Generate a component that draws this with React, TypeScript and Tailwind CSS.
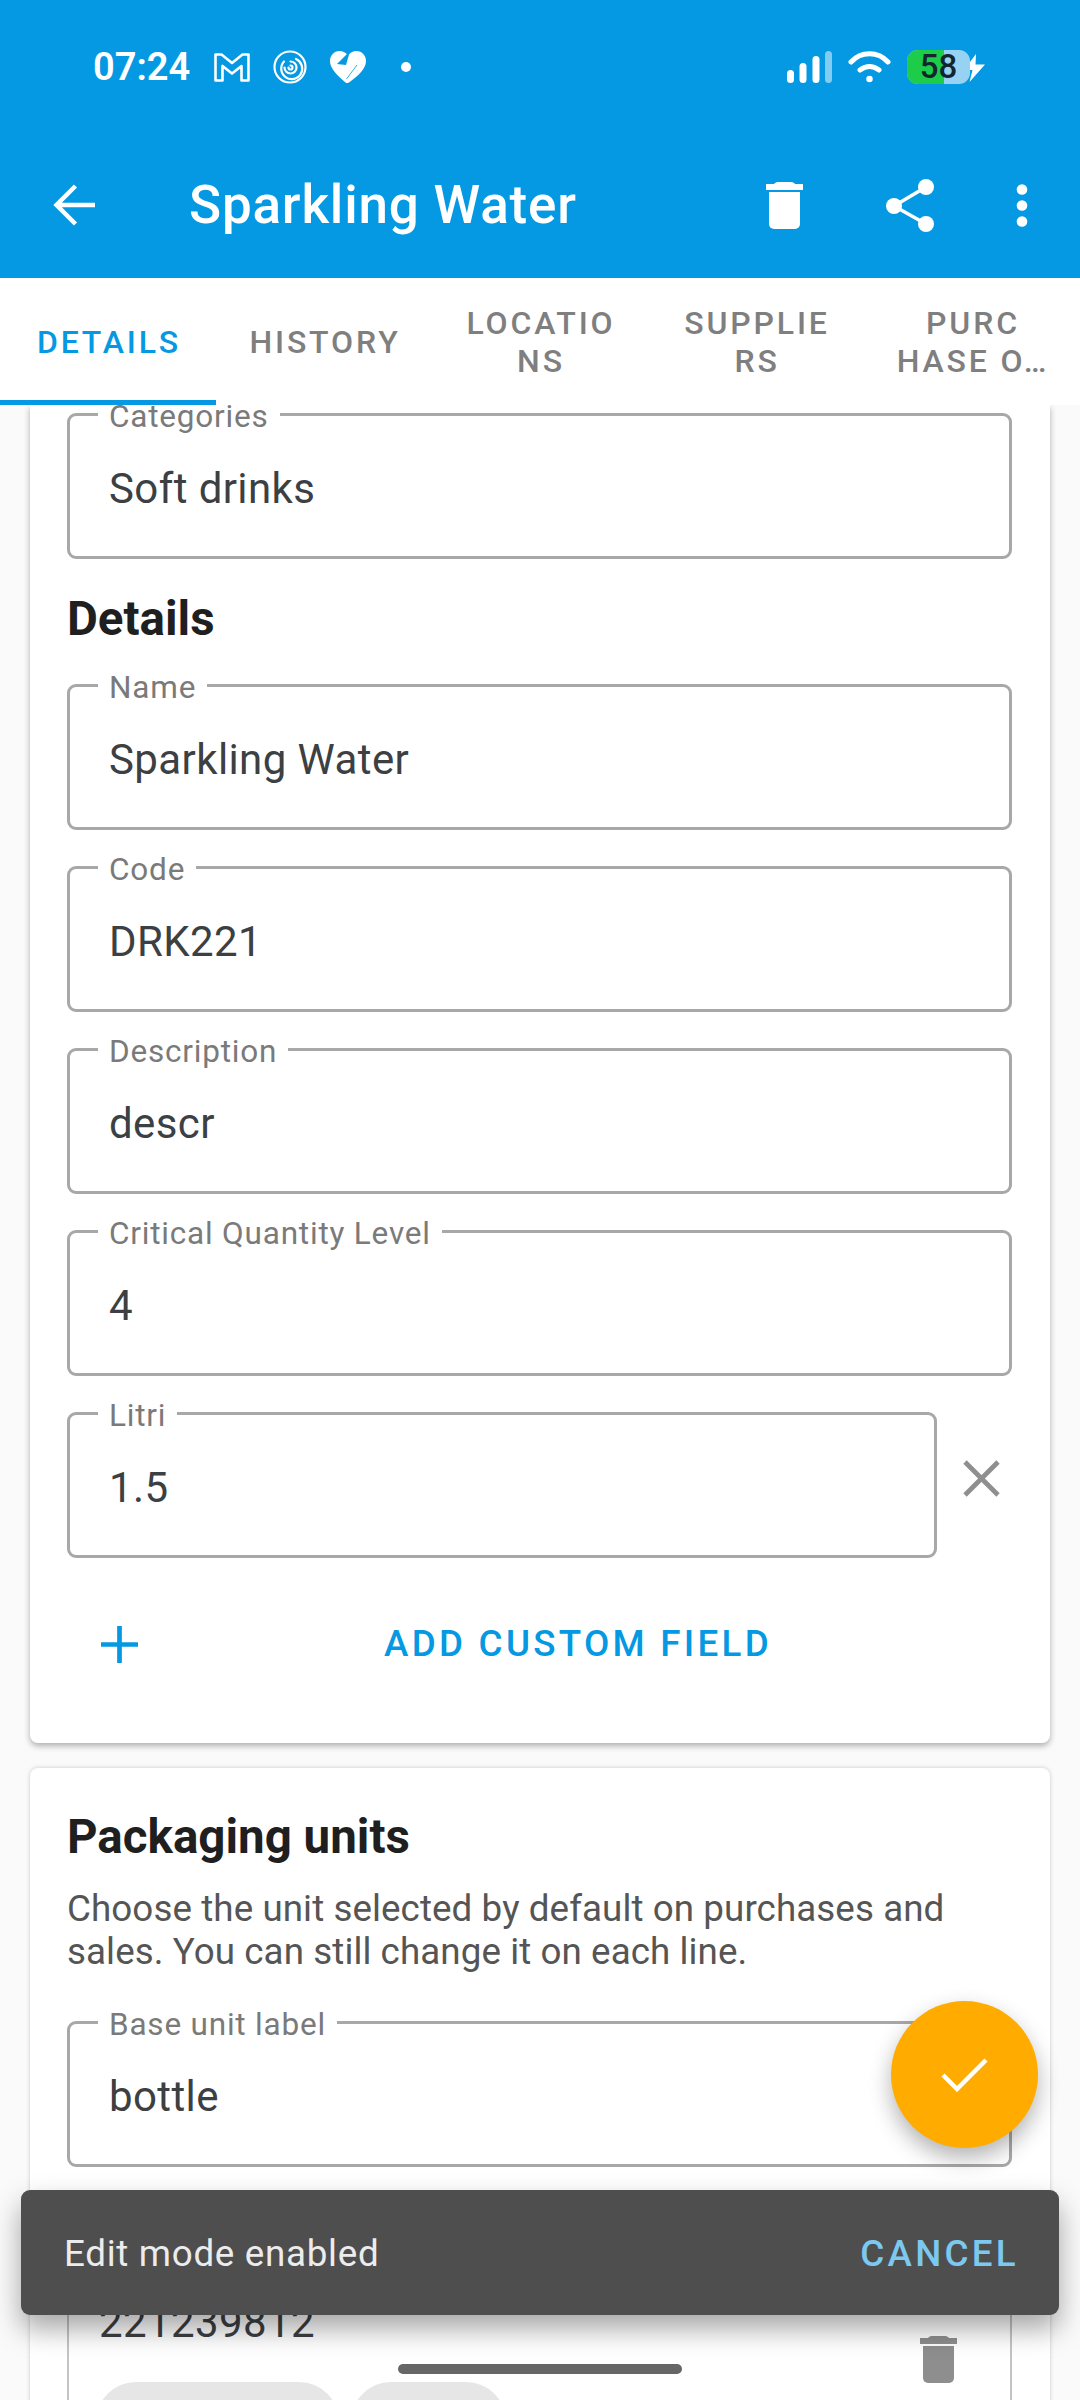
const tabs = [
  { lines: ["DETAILS"], active: true },
  { lines: ["HISTORY"] },
  { lines: ["LOCATIO", "NS"] },
  { lines: ["SUPPLIE", "RS"] },
  { lines: ["PURC", "HASE O…"] },
];

// Material "delete" bin, with a little gap between lid and body
function TrashIcon({ className }: { className?: string }) {
  return (
    <svg viewBox="0 0 37 47" className={className} fill="currentColor">
      <path d="M8 2c1-1.500 3-2 4-2h13c1 0 3 .5 4 2h8v6H0V2z" />
      <path d="M3 10h31v32a5 5 0 0 1-5 5H8a5 5 0 0 1-5-5z" />
    </svg>
  );
}

function StatusBar() {
  return (
    <div className="flex h-[132px] items-start justify-between pl-[93px] pr-[92px] pt-[46px]">
      <div className="flex h-[42px] items-center">
        <span className="w-[97px] text-[38px] leading-[42px] font-semibold whitespace-nowrap text-white">07:24</span>
        <svg viewBox="0 0 36 29" className="ml-[24px] h-[29px] w-[36px]" fill="none" stroke="#fff" strokeWidth="2.6" strokeLinejoin="round">
          <path d="M1.500 1.500h6l10.500 8.500 10.500-8.500h6v26h-7V13l-9.500 7.500L8.500 13v14.500h-7z" />
        </svg>
        <svg viewBox="0 0 34 34" className="ml-[23px] h-[34px] w-[34px]" fill="none" stroke="#fff" strokeWidth="2.2" strokeLinecap="round">
          <circle cx="17" cy="17" r="15.500" />
          <path d="M23 9a10.500 10.500 0 1 1-12 2.500M17.500 11.500a6 6 0 1 1-6 6M17.500 15.500a2 2 0 1 1-2 2" />
        </svg>
        <svg viewBox="0 0 36 32" className="ml-[23px] h-[32px] w-[36px]">
          <path d="M9.500 0C13 0 16 1.500 18 4.500 20 1.500 23 0 26.500 0 32 0 36 4.500 36 10c0 8-8 15-17 21.500-1 .8-2.500.8-3.500 0C8 25 0 18 0 10 0 4.500 4 0 9.500 0z" fill="#fff" />
          <path d="M20 0 7 13l9 1z" fill="#0499e2" />
          <path d="M27 14 16.500 28" stroke="#0499e2" strokeWidth="0.8" fill="none" />
        </svg>
        <span className="ml-[35px] h-[10px] w-[10px] rounded-full bg-white" />
      </div>
      <div className="flex h-[42px] items-center">
        <svg viewBox="0 0 45 32" className="h-[32px] w-[45px]">
          <rect x="0" y="19" width="7" height="13" rx="3.500" fill="#fff" />
          <rect x="12.500" y="12" width="7" height="20" rx="3.500" fill="#fff" />
          <rect x="25.500" y="5" width="7" height="27" rx="3.500" fill="#fff" />
          <rect x="38" y="0" width="7" height="32" rx="3.500" fill="#fff" fillOpacity="0.5" />
        </svg>
        <svg viewBox="0 0 43 32" className="ml-[16px] h-[32px] w-[43px]" fill="none" stroke="#fff" strokeWidth="5" strokeLinecap="round">
          <path d="M3 11C13 0 30 0 40 11" />
          <path d="M12 19c6-4.500 13-4.500 19 0" />
          <circle cx="21.500" cy="28" r="1.500" fill="#fff" strokeWidth="3.500" />
        </svg>
        <div className="relative ml-[16px] flex h-[34px] w-[63px] items-center justify-center rounded-[11px] bg-[#97d2f3]">
          <div className="absolute inset-y-0 left-0 w-[37px] rounded-l-[11px] bg-[#1dcd4a]" />
          <span className="relative text-[33px] leading-[34px] font-medium text-[#13262f]">58</span>
        </div>
        <svg viewBox="0 0 27 31" className="-ml-[9px] h-[31px] w-[27px]">
          <path d="M15 2 3 18h8.500L8.500 30 24 12.500h-9.500z" fill="#fff" stroke="#0499e2" strokeWidth="3" paintOrder="stroke" strokeLinejoin="round" />
        </svg>
      </div>
    </div>
  );
}

function AppBar() {
  return (
    <div className="flex h-[146px] items-center">
      <svg viewBox="0 0 42 42" className="ml-[53px] h-[42px] w-[42px]" fill="none" stroke="#fff" strokeWidth="4.500">
        <path d="M42 21H4M22.500 2 3.500 21l19 19" />
      </svg>
      <h1 className="ml-[94px] flex-1 text-[53px] leading-none font-medium tracking-[0.8px] text-white">Sparkling Water</h1>
      <TrashIcon className="h-[47px] w-[37px] text-white" />
      <svg viewBox="0 0 48 53" className="ml-[83px] h-[53px] w-[48px]" fill="#fff" stroke="#fff">
        <path d="M40 8 8 27l32 18" fill="none" strokeWidth="3.500" />
        <circle cx="40" cy="8" r="8" strokeWidth="0" />
        <circle cx="8" cy="27" r="8" strokeWidth="0" />
        <circle cx="40" cy="45" r="8" strokeWidth="0" />
      </svg>
      <svg viewBox="0 0 12 43" className="ml-[82px] mr-[52px] h-[43px] w-[12px]" fill="#fff">
        <circle cx="6" cy="5.500" r="5.300" />
        <circle cx="6" cy="21.500" r="5.300" />
        <circle cx="6" cy="37.500" r="5.300" />
      </svg>
    </div>
  );
}

function TabBar() {
  return (
    <div className="relative z-10 grid h-[127px] grid-cols-5 bg-white">
      {tabs.map((tab) => (
        <div
          key={tab.lines[0]}
          className={`flex flex-col items-center justify-center pl-[2px] text-[32px] leading-[38px] font-medium tracking-[2.85px] ${
            tab.active ? "border-b-[5px] border-[#0499e2] pt-[5px] text-[#0499e2]" : "text-[#7f7f7f]"
          }`}
        >
          {tab.lines.map((line) => (
            <span key={line} className="whitespace-nowrap">
              {line}
            </span>
          ))}
        </div>
      ))}
    </div>
  );
}

function Field({ label, value, className = "" }: { label: string; value: string; className?: string }) {
  return (
    <div className={`relative flex h-[146px] items-center rounded-[9px] border-[3px] border-[#a8a8a8] px-[39px] pt-[5px] ${className}`}>
      <span className="absolute -top-[16px] left-[28px] bg-white px-[11px] text-[31.5px] leading-[34px] tracking-[0.8px] text-[#7a7a7a]">
        {label}
      </span>
      <span className="text-[42px] leading-none tracking-[0.4px] text-[#3c4043]">{value}</span>
    </div>
  );
}

function Content() {
  return (
    <div className="flex flex-col gap-[25px] px-[30px]">
      <section className="rounded-b-[8px] bg-white pb-[66px] pl-[37px] pr-[38px] pt-[8px] shadow-[0_3px_6px_rgba(0,0,0,0.3)]">
        <Field label="Categories" value="Soft drinks" />
        <h2 className="mb-[37px] mt-[32px] text-[47.5px] leading-[56px] font-bold text-[#1f1f1f]">Details</h2>
        <div className="flex flex-col gap-[36px]">
          <Field label="Name" value="Sparkling Water" />
          <Field label="Code" value="DRK221" />
          <Field label="Description" value="descr" />
          <Field label="Critical Quantity Level" value="4" />
          <div className="flex items-start">
            <Field label="Litri" value="1.5" className="w-[870px]" />
            <svg viewBox="0 0 37 37" className="ml-[26px] mt-[48px] h-[37px] w-[37px]" stroke="#8f8f8f" strokeWidth="4.700">
              <path d="M2 2l33 33M35 2 2 35" />
            </svg>
          </div>
        </div>
        <div className="mt-[53px] flex h-[66px] items-center">
          <svg viewBox="0 0 37 37" className="ml-[34px] h-[37px] w-[37px]" stroke="#0499e2" strokeWidth="4.700">
            <path d="M18.500 0v37M0 18.500h37" />
          </svg>
          <span className="flex-1 pl-[6px] text-center text-[36.75px] font-medium tracking-[3.28px] text-[#0499e2]">
            ADD CUSTOM FIELD
          </span>
        </div>
      </section>

      <section className="rounded-t-[8px] bg-white pl-[37px] pr-[38px] pt-[42px] shadow-[0_0_4px_rgba(0,0,0,0.2)]">
        <h2 className="text-[47.5px] leading-[54px] font-bold text-[#1f1f1f]">Packaging units</h2>
        <p className="mt-[23px] text-[36.75px] leading-[43px] tracking-[0.08px] text-[#555555]">
          Choose the unit selected by default on purchases and sales. You can still change it on each line.
        </p>
        <Field label="Base unit label" value="bottle" className="mt-[48px]" />
        <div className="relative mt-[37px] h-[240px] rounded-[9px] border-2 border-[#c4c4c4] pl-[30px] pt-[95px]">
          <span className="block text-[42px] leading-[44px] tracking-[0.4px] text-[#3c4043]">221239812</span>
          <TrashIcon className="absolute right-[53px] top-[130px] h-[47px] w-[37px] text-[#8e8e8e]" />
          <div className="-ml-[3px] mt-[37px] flex gap-[12px]">
            <span className="h-[80px] w-[243px] rounded-[40px] bg-[#e6e6e6]" />
            <span className="h-[80px] w-[155px] rounded-[40px] bg-[#e6e6e6]" />
          </div>
        </div>
      </section>
    </div>
  );
}

export default function App() {
  return (
    <div className="relative flex h-[2400px] w-[1080px] flex-col overflow-hidden bg-[#fafafa] font-['Roboto',sans-serif]">
      <header className="bg-[#0499e2]">
        <StatusBar />
        <AppBar />
      </header>
      <TabBar />
      <div className="min-h-0 flex-1 overflow-hidden">
        <Content />
      </div>

      <button className="absolute left-[891px] top-[2001px] flex h-[147px] w-[147px] items-center justify-center rounded-full bg-[#ffab00] shadow-[0_10px_22px_rgba(0,0,0,0.3)]">
        <svg viewBox="0 0 47 35" className="h-[35px] w-[47px]" fill="none" stroke="#fff" strokeWidth="4.500">
          <path d="M2 18l14 14L45 3" />
        </svg>
      </button>

      <div className="absolute left-[21px] top-[2190px] flex h-[125px] w-[1038px] items-center justify-between rounded-[9px] bg-[#4e4e4e] pl-[43px] pr-[40px] pt-[3px] shadow-[0_14px_28px_rgba(0,0,0,0.35)]">
        <span className="text-[36.75px] tracking-[0.7px] text-[#ececec]">Edit mode enabled</span>
        <span className="text-[36.75px] font-medium tracking-[3.28px] text-[#7cc8ee]">CANCEL</span>
      </div>

      <div className="absolute left-[398px] top-[2364px] h-[10px] w-[284px] rounded-full bg-[#666666]" />
    </div>
  );
}
